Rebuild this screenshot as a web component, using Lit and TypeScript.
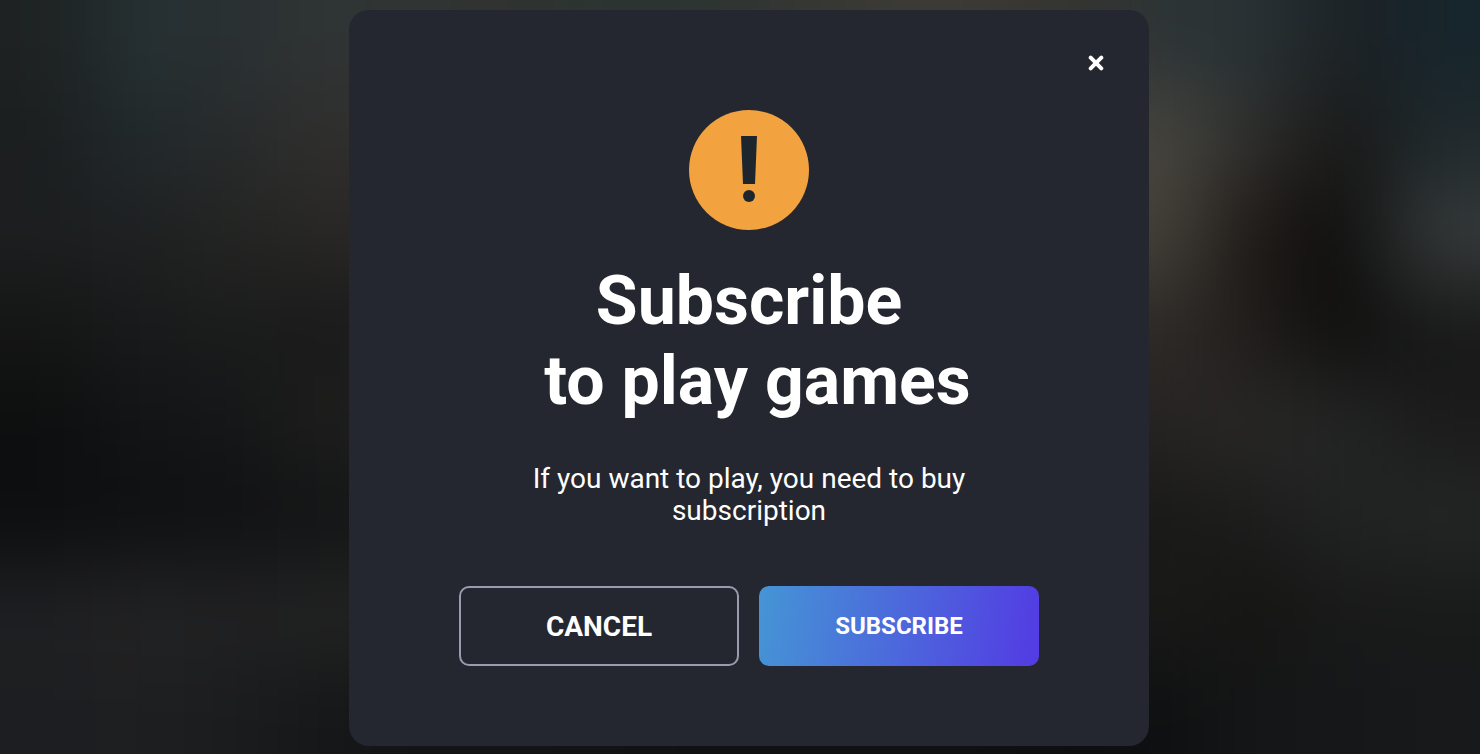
import { LitElement, html, css, svg } from "lit";
import { customElement } from "lit/decorators.js";

// Colour patches of the out-of-focus backdrop, row by row.
const PATCHES: string[][] = [
  "1e2222 253133 2a3032 2f3434 303433 30332f 2c3431 2c3431 343632 3b3a34 3b3a34 353430 2d3435 293235 1d2225 17252c",
  "1b1e1f 22292b 272a2b 302f2d 2f2d2a 2f2d2a 2f2d2a 2f2d2a 2f2d2a 2f2d2a 363530 403f3a 4a4841 2f2f2c 191817 20292c",
  "1d1f20 1e2021 232422 282725 282725 282725 282725 282725 282725 282725 343230 403d38 46423b 1f1916 0e0e0e 373b3b",
  "141514 191a1b 1b1b1b 191a1b 1b1b1b 1b1b1b 1b1b1b 1b1b1b 1b1b1b 1b1b1b 1b1b1b 2a2624 2f2a27 201d1b 0f0f0e 181818",
  "0d0e0e 131416 151617 1e1e1d 1e1e1d 1e1e1d 1e1e1d 1e1e1d 1e1e1d 1e1e1d 1e1e1d 222120 262423 292827 232524 1b1b1b",
  "0d0e10 0f1012 101113 131415 131415 131415 131415 131415 131415 131415 131415 161616 191918 1b1c1b 212222 242525",
  "1f2022 232324 212223 232323 222222 202020 1e1e1e 1c1c1c 1a1a1a 181818 181818 181818 1a1a19 151513 181918 181a19",
  "1d1e21 1e1f20 1b1c1e 161718 131415 131415 121314 101112 101112 101112 101112 0d0e0f 0e0f10 151617 161718 18191b",
].map((row) => row.split(" "));

const COLS = PATCHES[0].length;
const ROWS = PATCHES.length;

@customElement("blurred-backdrop")
export class BlurredBackdrop extends LitElement {
  static styles = css`
    :host {
      display: block;
      overflow: hidden;
      background: #1b1c1d;
    }
    .patches {
      display: block;
      width: 100%;
      height: 100%;
      overflow: visible;
      filter: blur(42px);
    }
  `;

  render() {
    return html`<svg
      class="patches"
      viewBox="0 0 ${COLS} ${ROWS}"
      preserveAspectRatio="none"
      shape-rendering="crispEdges"
      aria-hidden="true"
    >
      ${PATCHES.map((row, y) =>
        row.map((color, x) => {
          const left = x === 0 ? -2 : x;
          const top = y === 0 ? -2 : y;
          const right = x === COLS - 1 ? COLS + 2 : x + 1;
          const bottom = y === ROWS - 1 ? ROWS + 2 : y + 1;
          return svg`<rect x=${left} y=${top} width=${right - left} height=${bottom - top} fill=${"#" + color}></rect>`;
        })
      )}
    </svg>`;
  }
}

@customElement("app-root")
export class AppRoot extends LitElement {
  static styles = css`
    :host {
      display: block;
      position: relative;
      min-height: 100vh;
      color: #fff;
      font-family: Roboto, "Liberation Sans", sans-serif;
    }
    * {
      box-sizing: border-box;
    }
    .backdrop {
      position: absolute;
      inset: 0;
    }
    .overlay {
      position: relative;
      display: flex;
      justify-content: center;
      align-items: flex-start;
      min-height: 100vh;
      padding: 10px 0 8px 18px;
    }
    .dialog {
      display: flex;
      flex-direction: column;
      align-items: center;
      width: 100%;
      max-width: 800px;
      padding: 41px 41px 80px;
      border-radius: 20px;
      background: #24272f;
      text-align: center;
    }
    button {
      margin: 0;
      padding: 0;
      border: 0;
      background: none;
      color: inherit;
      font-family: inherit;
      cursor: pointer;
    }
    .close {
      align-self: flex-end;
      display: flex;
      width: 24px;
      height: 24px;
      padding: 4px;
      margin-bottom: 35px;
    }
    .close svg {
      width: 16px;
      height: 16px;
    }
    .alert {
      display: block;
      width: 120px;
      height: 120px;
    }
    h1 {
      margin: 31px 0 0;
      font-size: 68px;
      line-height: 80px;
      font-weight: 700;
    }
    p {
      max-width: 480px;
      margin: 42px 0 0;
      font-size: 28px;
      line-height: 32px;
    }
    .actions {
      display: grid;
      grid-template-columns: 1fr 1fr;
      gap: 20px;
      width: 100%;
      max-width: 580px;
      margin-top: 59px;
    }
    .action {
      height: 80px;
      border-radius: 10px;
      font-weight: 700;
      text-transform: uppercase;
    }
    .cancel {
      border: 2px solid #9b9bb0;
      font-size: 28px;
    }
    .subscribe {
      background: linear-gradient(98deg, #4595d5 0%, #533be3 100%);
      font-size: 24px;
    }
  `;

  render() {
    return html`
      <blurred-backdrop class="backdrop"></blurred-backdrop>
      <div class="overlay">
        <section class="dialog" role="dialog" aria-modal="true" aria-labelledby="title">
          <button class="close" type="button" aria-label="Close">
            <svg viewBox="0 0 16 16" aria-hidden="true">
              <path d="M2.7 2.7 13.3 13.3M13.3 2.7 2.7 13.3" fill="none" stroke="#fff" stroke-width="4" stroke-linecap="round" />
            </svg>
          </button>
          <svg class="alert" viewBox="0 0 120 120" aria-hidden="true">
            <circle cx="60" cy="60" r="60" fill="#f2a340" />
            <path d="M52 26H68L66 74H54Z" fill="#1e262d" />
            <circle cx="60" cy="86" r="6" fill="#1e262d" />
          </svg>
          <h1 id="title">Subscribe<br />&nbsp;to play games</h1>
          <p>If you want to play, you need to buy subscription</p>
          <div class="actions">
            <button class="action cancel" type="button">Cancel</button>
            <button class="action subscribe" type="button">Subscribe</button>
          </div>
        </section>
      </div>
    `;
  }
}
